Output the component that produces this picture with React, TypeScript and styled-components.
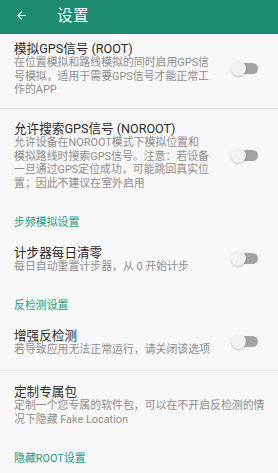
import React from "react";
import styled, { createGlobalStyle } from "styled-components";

const Global = createGlobalStyle`
  html, body { margin: 0; padding: 0; background: #f8f8f8; }
  body { font-family: Roboto, "Noto Sans CJK SC", sans-serif; -webkit-font-smoothing: antialiased; }
  * { box-sizing: border-box; }
`;

const Page = styled.div`
  width: 278px;
  height: 473px;
  overflow: hidden;
  background: #f8f8f8;
  display: flex;
  flex-direction: column;
`;

const Toolbar = styled.div`
  height: 34px;
  flex: none;
  background: #1c8b6f;
  display: flex;
  align-items: center;
  padding: 0 0 3px 15px;
  color: #fff;
`;

const BackIcon = styled.svg`
  width: 13px;
  height: 13px;
  fill: #fff;
  flex: none;
`;

const Title = styled.div`
  margin-left: 29px;
  font-size: 15.5px;
  line-height: 20px;
  letter-spacing: 0.5px;
`;

const Item = styled.div<{ $top?: number; $bottom?: number; $toggle: boolean }>`
  display: flex;
  align-items: center;
  padding: ${(p) => p.$top ?? 13.5}px ${(p) => (p.$toggle ? 20 : 10)}px
    ${(p) => p.$bottom ?? 13.5}px 14px;
`;

const TextCol = styled.div`
  flex: 1;
  min-width: 0;
`;

const ItemTitle = styled.div`
  font-size: 12.6px;
  line-height: 15px;
  color: #2b2b2b;
`;

const Summary = styled.div`
  font-size: 10.9px;
  line-height: 13.5px;
  color: #8e8e8e;
  white-space: pre-line;
`;

const Divider = styled.div`
  height: 1px;
  background: #e2e2e2;
  flex: none;
`;

const Section = styled.div`
  padding: 11.5px 14px 0;
  font-size: 10.9px;
  line-height: 16px;
  color: #2a9a7f;
`;

const Track = styled.div`
  position: relative;
  width: 26px;
  height: 11px;
  border-radius: 6px;
  background: #a3a3a3;
  flex: none;
  margin-left: 6px;
`;

const Thumb = styled.div`
  position: absolute;
  left: -1px;
  top: -2px;
  width: 15px;
  height: 15px;
  border-radius: 50%;
  background: #f2f2f2;
  box-shadow: 0 1px 2px rgba(0, 0, 0, 0.22);
`;

const Switch = () => (
  <Track>
    <Thumb />
  </Track>
);

type Row = { title: string; summary: string; toggle?: boolean; top?: number; bottom?: number };

const Pref = ({ title, summary, toggle = true, top, bottom }: Row) => (
  <Item $top={top} $bottom={bottom} $toggle={toggle}>
    <TextCol>
      <ItemTitle>{title}</ItemTitle>
      <Summary>{summary}</Summary>
    </TextCol>
    {toggle && <Switch />}
  </Item>
);

export default function App() {
  return (
    <Page>
      <Global />
      <Toolbar>
        <BackIcon viewBox="0 0 24 24">
          <path d="M20 11H7.83l5.59-5.59L12 4l-8 8 8 8 1.41-1.41L7.83 13H20v-2z" />
        </BackIcon>
        <Title>设置</Title>
      </Toolbar>
      <Pref
        title="模拟GPS信号 (ROOT)"
        summary={"在位置模拟和路线模拟的同时启用GPS信\n号模拟，适用于需要GPS信号才能正常工\n作的APP"}
        top={7}
        bottom={11}
      />
      <Divider />
      <Pref
        title="允许搜索GPS信号 (NOROOT)"
        summary={"允许设备在NOROOT模式下模拟位置和\n模拟路线时搜索GPS信号。注意：若设备\n一旦通过GPS定位成功，可能跳回真实位\n置；因此不建议在室外启用"}
        top={12.5}
      />
      <Section>步频模拟设置</Section>
      <Pref title="计步器每日清零" summary="每日自动重置计步器，从 0 开始计步" />
      <Section>反检测设置</Section>
      <Pref title="增强反检测" summary="若导致应用无法正常运行，请关闭该选项" />
      <Divider />
      <Pref
        title="定制专属包"
        summary={"定制一个您专属的软件包，可以在不开启反检测的情\n况下隐藏 Fake Location"}
        toggle={false}
      />
      <Section>隐藏ROOT设置</Section>
    </Page>
  );
}
